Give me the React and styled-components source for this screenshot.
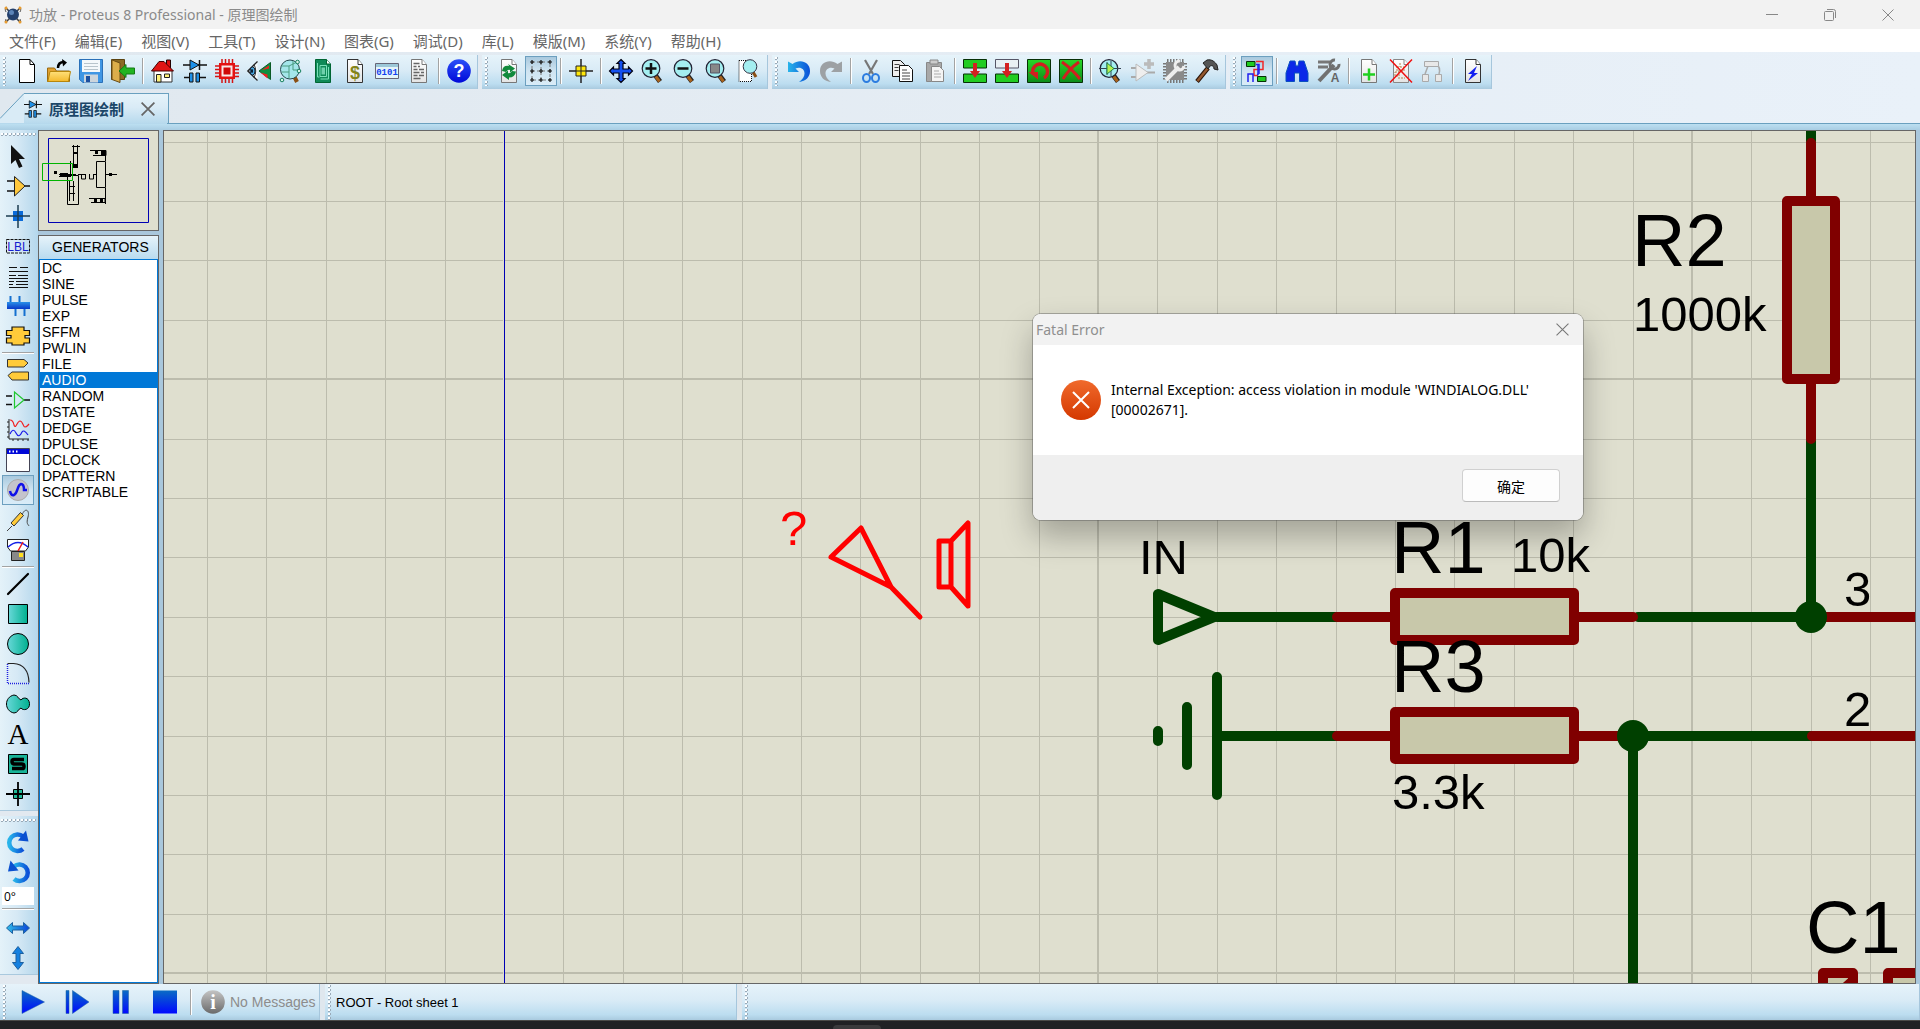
import React from "react";
import styled, { createGlobalStyle, css } from "styled-components";

const GlobalStyle = createGlobalStyle`
  * {
    box-sizing: border-box;
  }
  body {
    margin: 0;
    overflow: hidden;
    font-family: "Noto Sans", "Noto Sans CJK SC", sans-serif;
    font-size: 15px;
    color: #000;
  }
  button {
    padding: 0;
    border: none;
    background: none;
    font: inherit;
    color: inherit;
  }
  ul {
    margin: 0;
    padding: 0;
    list-style: none;
  }
  svg {
    display: block;
    flex: none;
  }
`;

/* ---------- window ---------- */
const Window = styled.div`
  display: flex;
  flex-direction: column;
  height: 100vh;
  background: #e4ebf2;
`;

const TitleBar = styled.header`
  display: flex;
  align-items: center;
  height: 29px;
  padding: 0 3px;
  background: #f2f2f2;
  color: #8a8a8a;
`;

const WindowTitle = styled.h1`
  flex: 1;
  margin: 0 0 0 6px;
  font-size: 14px;
  font-weight: 400;
  line-height: 20px;
`;

const CaptionButton = styled.button`
  display: flex;
  align-items: center;
  justify-content: center;
  width: 58px;
  height: 28px;
`;

const MenuBar = styled.nav`
  display: flex;
  gap: 19px;
  height: 23px;
  padding-left: 9px;
  background: #fff;
  color: #666;
  line-height: 24px;
`;

/* ---------- toolbars ---------- */
const ToolRow = styled.div`
  display: flex;
  gap: 4px;
  padding-top: 3px;
  background: linear-gradient(90deg, #e0e8ef, #e9f1f9);
`;

const blueDown = css`
  background: linear-gradient(#e6f3fa, #d9ebf6 45%, #bcddf0 85%, #a9cadf);
`;

const ToolGroup = styled.div`
  display: flex;
  height: 34px;
  padding: 1px 2px 3px 0;
  border-right: 1px solid #a6c6dc;
  ${blueDown}
`;

const Grip = styled.span`
  width: 11px;
  flex: none;
  background: radial-gradient(circle at 1px 1px, #fff 1px, #9aaab8 1px, #9aaab8 2px, transparent 2px) 3px 1px / 3px 4px repeat-y;
`;

const ToolButton = styled.button`
  display: flex;
  align-items: center;
  justify-content: center;
  width: 32px;
  height: 30px;
  flex: none;
  ${(props) =>
    props.$active &&
    css`
      border: 1px solid #6c9fbf;
      background: linear-gradient(#a9c9de, #cfe4f1 50%, #d9ecf8);
    `}
`;

const Divider = styled.span`
  width: 2px;
  height: 26px;
  margin: 2px 3px;
  flex: none;
  background: linear-gradient(90deg, #a3a3a3 50%, #fff 50%);
`;

/* ---------- document tab ---------- */
const TabRow = styled.div`
  display: flex;
  height: 41px;
  padding-top: 4px;
  background: linear-gradient(90deg, #e0e8ef, #e9f1f9);
`;

const Tab = styled.div`
  display: flex;
  align-items: center;
  width: 145px;
  height: 31px;
  border-top: 1px solid #6aa0bf;
  border-right: 1px solid #6aa0bf;
  background: linear-gradient(#e6f3fa, #d9ebf6 45%, #b6d9ed);
`;

const TabName = styled.span`
  flex: 1;
  margin-left: 7px;
  color: #1b4668;
  font-weight: 700;
  line-height: 22px;
`;

const TabClose = styled.button`
  width: 40px;
  height: 28px;
  display: flex;
  align-items: center;
  justify-content: center;
`;

const TabBand = styled.div`
  height: 7px;
  margin-top: -7px;
  border-top: 1px solid #6aa0bf;
  background: linear-gradient(#bcdff1, #a9cde3);
  /* the tab opens into the band */
  border-image: linear-gradient(90deg, #b6d9ed 168px, #6aa0bf 168px) 1;
`;

/* ---------- work area ---------- */
const WorkArea = styled.div`
  display: flex;
  flex: 1;
  min-height: 0;
  padding-right: 4px;
  background: #a9c7dc;
`;

const SideBar = styled.div`
  display: flex;
  flex-direction: column;
  gap: 5px;
  width: 38px;
  flex: none;
  background: #e2e9f0;
`;

const SideGroup = styled.div`
  display: flex;
  flex-direction: column;
  align-items: center;
  padding: 0 2px 1px 0;
  border-bottom: 1px solid #a9c9de;
  background: linear-gradient(90deg, #e4f2f9, #d6e9f5 45%, #b4d7ec);
`;

const SideGrip = styled.span`
  align-self: stretch;
  height: 11px;
  background: radial-gradient(circle at 1px 1px, #fff 1px, #9aaab8 1px, #9aaab8 2px, transparent 2px) 1px 3px / 4px 3px repeat-x;
`;

const SideDivider = styled.span`
  width: 32px;
  height: 2px;
  margin: ${(props) => props.$space}px 0;
  background: linear-gradient(#a3a3a3 50%, #fff 50%);
`;

const AngleInput = styled.input`
  width: 32px;
  height: 18px;
  padding: 0 2px;
  border: none;
  background: #fff;
  font-family: "Open Sans", sans-serif;
  font-size: 12px;
`;

const Panel = styled.aside`
  display: flex;
  flex-direction: column;
  gap: 4px;
  width: 121px;
  margin-right: 4px;
  flex: none;
`;

const Overview = styled.div`
  height: 101px;
  border: 1px solid #666;
  background: #dfdfcf;
`;

const Picker = styled.div`
  display: flex;
  flex-direction: column;
  flex: 1;
  border: 1px solid #666;
`;

const PickerTitle = styled.h2`
  height: 23px;
  margin: 0;
  padding-left: 13px;
  background: linear-gradient(#e6f3fa, #b9dbef);
  font: 400 14px/23px "Liberation Sans", Arial, sans-serif;
`;

const PickerList = styled.ul`
  flex: 1;
  border: 1px solid #0078d7;
  background: #fff;
  font: 14px/16px "Liberation Sans", Arial, sans-serif;
`;

const PickerItem = styled.li`
  height: 16px;
  padding-left: 2px;
  ${(props) =>
    props.$selected &&
    css`
      background: #0078d7;
      color: #fff;
    `}
`;

const Sheet = styled.main`
  position: relative;
  flex: 1;
  min-width: 0;
  border: 1px solid #666;
  background: #dfdfcf;
`;

const SheetDrawing = styled.svg`
  width: 100%;
  height: 100%;
  overflow: hidden;
  font-family: "Liberation Sans", Arial, sans-serif;
`;

/* ---------- error dialog ---------- */
const Dialog = styled.section`
  position: absolute;
  top: 183px;
  left: 869px;
  width: 550px;
  border-radius: 8px;
  background: #fff;
  box-shadow: 0 0 0 1px rgba(90, 90, 90, 0.45), 0 16px 32px rgba(0, 0, 0, 0.28);
  overflow: hidden;
`;

const DialogTitle = styled.div`
  display: flex;
  align-items: center;
  justify-content: space-between;
  height: 31px;
  padding-left: 3px;
  background: #f2f2f2;
  color: #8f8f8f;
  font-size: 14px;
`;

const DialogClose = styled.button`
  display: flex;
  align-items: center;
  justify-content: center;
  width: 42px;
  height: 31px;
`;

const DialogBody = styled.div`
  display: flex;
  align-items: center;
  gap: 10px;
  height: 110px;
  padding: 0 28px;
`;

const DialogText = styled.p`
  margin: 0;
  font-size: 14px;
  line-height: 20px;
`;

const DialogFooter = styled.div`
  display: flex;
  justify-content: flex-end;
  align-items: center;
  height: 65px;
  padding: 0 23px 4px;
  background: #efefef;
`;

const OkButton = styled.button`
  width: 98px;
  height: 33px;
  border: 1px solid #d0d0d0;
  border-bottom-color: #bbb;
  border-radius: 4px;
  background: #fdfdfd;
  font-size: 14px;
`;

/* ---------- bottom ---------- */
const StatusBar = styled.footer`
  display: flex;
  gap: 5px;
  height: 36px;
  background: #dfe7ee;
`;

const StatusGroup = styled.div`
  display: flex;
  align-items: center;
  width: ${(props) => (props.$width ? `${props.$width}px` : "auto")};
  flex: ${(props) => (props.$width ? "none" : 1)};
  border-right: 1px solid #a6c6dc;
  font-family: "Liberation Sans", Arial, sans-serif;
  font-size: 13px;
  ${blueDown}

  ${Grip} {
    align-self: stretch;
  }
`;

const PlayButton = styled.button`
  display: flex;
  align-items: center;
  justify-content: center;
  width: 44px;
  height: 30px;
`;

const Messages = styled.div`
  display: flex;
  align-items: center;
  gap: 5px;
  margin-left: 6px;
  color: #8c8c8c;
  font-size: 14px;
`;

const Taskbar = styled.div`
  display: flex;
  align-items: flex-end;
  height: 9px;
  padding-left: 833px;
  border-top: 1px solid #4a4a48;
  background: #202124;
`;

const TaskItem = styled.span`
  width: 48px;
  height: 4px;
  border-radius: 4px 4px 0 0;
  background: #3a3a3c;
`;

/* ---------- icons ---------- */
const IconSvg = styled.svg`
  overflow: visible;
`;

const Page = ({ stroke = "#333", children }) => (
  <>
    <path d="M4.500 .5h10.500l4.500 5v18h-15z" fill="url(#paper)" stroke={stroke} />
    <path d="M15 .5v5h4.500" fill="#fff" stroke={stroke} />
    {children}
  </>
);

const Lens = ({ children }) => (
  <>
    <path d="M14.500 16.500l4.500 6" stroke="#222" strokeWidth="5" />
    <path d="M14.500 17l4 5.500" stroke="#a8621c" strokeWidth="3" />
    <circle cx="10" cy="9.500" r="8.800" fill="#a4eef0" stroke="#223" strokeWidth="1.200" />
    {children}
  </>
);

const Diode = () => (
  <>
    <path d="M0 6h24M1 18.500h8M15 18.500h8" stroke="#111" strokeWidth="1.500" />
    <path d="M7 1v10l9-5z" fill="#1e90e8" stroke="#111" />
    <path d="M16.500 1v10" stroke="#111" strokeWidth="1.500" />
    <path d="M6.500 14h3.500v9h-3.500zM13 14h3.500v9H13z" fill="#1e90e8" stroke="#111" />
  </>
);

const icons = {
  new: <><path d="M4.500 .5h10.500l4.500 5v18h-15z" fill="#fff" stroke="#000" /><path d="M15 .5v5h4.500" fill="none" stroke="#000" /></>,
  open: (
    <>
      <path d="M.5 22.500V9h7l2 3h13v10.500z" fill="#e0a030" stroke="#9a6a10" />
      <path d="M3 12.500h20.500l-2 10H.8z" fill="url(#gold)" stroke="#b8860b" />
      <path d="M11 9c0-4 2-6 6-6" fill="none" stroke="#000" strokeWidth="2.500" />
      <path d="M15 0l5 3.500-4 4z" fill="#000" />
    </>
  ),
  save: (
    <>
      <path d="M.5 .5h23v23H4l-3.500-3z" fill="#3f96e4" stroke="#2a70b8" />
      <path d="M3 1h18v12H3z" fill="#f4f8fb" />
      <path d="M5 4.500h14M5 7.500h14M5 10.500h14" stroke="#b8c4cc" />
      <path d="M5 15.500h14v8H5z" fill="#ccd5dc" />
      <path d="M7 17h4v6H7z" fill="#1c50a0" />
    </>
  ),
  exit: (
    <>
      <path d="M.5 .5h13v20h-13z" fill="#8a6a24" stroke="#5a4210" />
      <path d="M1 1l8 3v19.500l-8-3z" fill="#dcae4a" stroke="#6a4c14" />
      <path d="M8 12l7-6.500v3.500h8.500v6H15v3.500z" fill="#22b422" stroke="#157a15" />
    </>
  ),
  home: (
    <>
      <path d="M15.500 1h4v8h-4z" fill="#e01010" stroke="#200" />
      <path d="M3 11h18v12H3z" fill="#fff" stroke="#333" />
      <path d="M.5 12L8 2.500h5L22.500 12z" fill="#e01414" stroke="#400" />
      <path d="M5.500 15.500h4.500v7.500H5.500z" fill="#fff27a" stroke="#222" />
      <path d="M13.500 15h5v3.500h-5z" fill="#fff27a" stroke="#222" />
    </>
  ),
  diode: <Diode />,
  chip: (
    <>
      <path d="M7 0v24M10.500 0v24M14 0v24M17.500 0v24M0 7h24M0 10.500h24M0 14h24M0 17.500h24" stroke="#d41414" strokeWidth="1.500" />
      <path d="M4 4h16v16H4z" fill="#e41212" />
      <path d="M6.500 6.500h11v11h-11z" fill="#f8e8e8" />
      <path d="M8.500 8.500h7v7h-7z" fill="#d00808" />
    </>
  ),
  eye: (
    <>
      <path d="M23.500 3.500v17L12 12z" fill="#109040" stroke="#0a5a24" />
      <path d="M15 11l7-4.500v3zM13.500 13.500l7 2v4z" fill="#f02020" />
      <path d="M10.500 2.500L.8 12l9.700 9.500" fill="#f4fafc" stroke="#222" strokeWidth="1.300" />
      <path d="M7 5.500q3.500 6.500 0 13" fill="none" stroke="#333" />
      <ellipse cx="5.500" cy="12" rx="2.500" ry="4" fill="#4aa8e0" stroke="#123" />
      <ellipse cx="5" cy="12" rx="1" ry="2" fill="#012" />
    </>
  ),
  zoomPart: (
    <>
      <path d="M15 17l3 6" stroke="#8a4f14" strokeWidth="4" />
      <circle cx="11" cy="10.500" r="9.500" fill="#a4e6ea" stroke="#26484c" />
      <path d="M3 7h7v12M10 7l8-4M3 13h7M14 2v9h6" fill="none" stroke="#4a9c80" />
      <g fill="#d8f4e8" stroke="#168060"><circle cx="18.500" cy="3" r="1.800" /><circle cx="3" cy="21" r="1.800" /><circle cx="20" cy="12" r="1.800" /></g>
    </>
  ),
  board: (
    <>
      <path d="M4.500 .5h11l4 4.500v18.500h-15z" fill="#0f8a58" stroke="#063" />
      <path d="M15.500 .5V5h4" fill="#fff" stroke="#063" />
      <path d="M9 6.500h6.500v11H9zM6.500 4v14h2M17.500 8v12h-8" fill="none" stroke="#7ae0b8" />
      <path d="M10.500 8.500h3.500v7h-3.500z" fill="#6fd0ac" />
    </>
  ),
  dollar: <Page><text x="12" y="20" textAnchor="middle" fontSize="18" fontWeight="700" fontFamily="Liberation Sans" fill="#84841a">$</text></Page>,
  binary: (
    <>
      <path d="M.5 4.500h23v15H.5z" fill="#e4f4fa" stroke="#667" />
      <path d="M1 5h22v3H1z" fill="#9cc8d8" />
      <text x="12" y="16" textAnchor="middle" fontSize="9" fontWeight="700" fontFamily="Liberation Mono" fill="#1040f0">0101</text>
    </>
  ),
  report: <Page stroke="#777"><path d="M6.500 4.500h6M6.500 7.500h3M11 7.500h2M6.500 10.500h4M12 10.500h5M6.500 13.500h6M14 13.500h3M6.500 16.500h4M12 16.500h5M6.500 19.500h7" stroke="#666" strokeWidth="1.500" /></Page>,
  help: (
    <>
      <circle cx="12" cy="12" r="11.800" fill="url(#helpBlue)" />
      <text x="12" y="18" textAnchor="middle" fontSize="18" fontWeight="700" fontFamily="Liberation Sans" fill="#fff">?</text>
    </>
  ),
  refresh: (
    <Page stroke="#777">
      <path d="M5 12q1-6 7-5l-1-2 7 4.500-5 4v-2.500q-2-1-4 2z" fill="#128a3c" />
      <path d="M19 12.500q-1 6-7 6v2.500l-7-5 6-4.500v2.500q2 1 4-2z" fill="#128a3c" />
    </Page>
  ),
  grid: (
    <>
      <path d="M3 3h18v18H3zM12 3v18M3 12h18" fill="none" stroke="#777" strokeDasharray="3 2" />
      {[3, 12, 21].map((y) => (
        <path key={y} d={`M1 ${y}h4M3 ${y - 2}v4M10 ${y}h4M12 ${y - 2}v4M19 ${y}h4M21 ${y - 2}v4`} stroke="#111" strokeWidth="1.200" />
      ))}
    </>
  ),
  origin: <><path d="M0 12h24M12 0v24" stroke="#222" strokeWidth="1.500" /><path d="M7 7h10v10H7z" fill="#ffe80a" stroke="#222" /><path d="M12 7v10M7 12h10" stroke="#222" /></>,
  pan: <path d="M12 .5l4 4h-2v5.500h5.500V8l4 4-4 4v-2H14v5.500h2l-4 4-4-4h2V14H4.500v2l-4-4 4-4v2H10V4.500H8z" fill="#1450f0" stroke="#001" strokeWidth="1.200" />,
  zoomIn: <Lens><path d="M4.500 9.500h11M10 4v11" stroke="#111" strokeWidth="2.500" /></Lens>,
  zoomOut: <Lens><path d="M4.500 9.500h11" stroke="#111" strokeWidth="2.500" /></Lens>,
  zoomAll: <Lens><path d="M5.500 5h9v9h-9z" fill="#888" stroke="#556" /></Lens>,
  zoomArea: (
    <>
      <path d="M2 1.500h12.500v21H2z" fill="#fff" stroke="#111" strokeDasharray="1 1" />
      <path d="M16 13l3 5" stroke="#8a4f14" strokeWidth="3" />
      <circle cx="13" cy="7.500" r="6.800" fill="#a4eef0" stroke="#334" />
    </>
  ),
  undo: <path d="M1 2.500V13h11l-3.500-3.500c5-2 9 .5 9 5 0 3-2 6-5.500 8.500 7-1 11-5 11-11C23 3 13-.5 5.500 5z" fill="url(#undoBlue)" />,
  redo: <path d="M23 2.500V13H12l3.500-3.500c-5-2-9 .5-9 5 0 3 2 6 5.500 8.500-7-1-11-5-11-11C1 3 11-.5 18.500 5z" fill="#9da1a4" />,
  cut: (
    <>
      <path d="M6 1l8 14M18 1l-8 14" stroke="#777" strokeWidth="2.200" />
      <ellipse cx="7.500" cy="19" rx="3.500" ry="4" fill="none" stroke="#2c7ce0" strokeWidth="2" />
      <ellipse cx="16.500" cy="19" rx="3.500" ry="4" fill="none" stroke="#2c7ce0" strokeWidth="2" />
    </>
  ),
  copy: (
    <>
      <path d="M1.500 1.500h8l4 4v12h-12z" fill="#eee" stroke="#111" />
      <path d="M3.500 5.500h5M3.500 8.500h4M3.500 11.500h4" stroke="#444" />
      <path d="M8.500 6.500h9l4 4v12h-13z" fill="#fff" stroke="#111" />
      <path d="M11 11h5M11 14h8M11 17h8M11 20h8" stroke="#444" />
    </>
  ),
  paste: (
    <>
      <path d="M3.500 3.500h15v19h-15z" fill="#a8a8a8" stroke="#888" />
      <path d="M7 1h8v4H7z" fill="#ccc" stroke="#888" />
      <path d="M8.500 7.500h8l4 4v11h-12z" fill="#f4f4f4" stroke="#888" />
      <path d="M11 12h5M11 15h7M11 18h7" stroke="#aaa" />
    </>
  ),
  blockCopy: <><path d="M.5 .5h23v8.500H.5zM.5 15h23v8.500H.5z" fill="#22cc22" stroke="#063006" /><path d="M12 4v10" stroke="#d42020" strokeWidth="4" /><path d="M7 12h10l-5 7z" fill="#d42020" /></>,
  blockMove: <><path d="M.5 .5h23v8.500H.5z" fill="#e8f0f4" stroke="#556" /><path d="M.5 15h23v8.500H.5z" fill="#22cc22" stroke="#063006" /><path d="M12 4v10" stroke="#d42020" strokeWidth="4" /><path d="M7 12h10l-5 7z" fill="#d42020" /></>,
  blockRotate: <><path d="M.5 .5h23v23H.5z" fill="url(#leaf)" stroke="#063006" /><path d="M6 15a7.500 7.500 0 1 1 11 4" fill="none" stroke="#d02020" strokeWidth="3.500" /><path d="M1.500 13h9.500v7.500z" fill="#d02020" /></>,
  blockDelete: <><path d="M.5 .5h23v23H.5z" fill="url(#leaf)" stroke="#063006" /><path d="M3 3q10 7 18 17M20 3Q10 10 4 20" fill="none" stroke="#d02020" strokeWidth="3" /></>,
  pick: <Lens><path d="M0 9.500h22M8 3v13M12 2v15" stroke="#345" /><path d="M8 4v11l7-5.500z" fill="#b4f050" stroke="#284" /></Lens>,
  make: (
    <>
      <path d="M0 9h5M0 18h5M15 13.500h9" stroke="#aaa" strokeWidth="2" />
      <path d="M5 5v17l12-8.500z" fill="#eee" stroke="#bbb" />
      <path d="M18 0v10M13 5h10" stroke="#bbb" strokeWidth="3.500" />
    </>
  ),
  packaging: (
    <>
      <path d="M3 3h18v18H3z" fill="#8a8a8a" />
      <path d="M4 1.500h17M4 22.500h17M1.500 4v17M22.500 4v17" stroke="#777" strokeWidth="3" strokeDasharray="1.500 1.500" />
      <path d="M3 21L16 8" stroke="#eee" strokeWidth="4" />
      <path d="M21 7a4.500 4.500 0 1 1-4-5" fill="none" stroke="#eee" strokeWidth="3" />
    </>
  ),
  hammer: (
    <>
      <path d="M2 22.500L13 9" stroke="#2a1408" strokeWidth="4.500" />
      <path d="M2.500 22L13 9" stroke="#94582e" strokeWidth="2.500" />
      <path d="M8 4l4-3c5-1 8 2 10 5l1 5-4-1c0-3-2-4-4-3l-2 3z" fill="#555" stroke="#222" />
    </>
  ),
  autoroute: (
    <>
      <path d="M11 2.500h7v8h-9v6h4" fill="none" stroke="#f02828" strokeWidth="1.500" />
      <path d="M8 5v0M13 5v10.500h-1M3 23v-8h5v8" fill="none" stroke="#2020f0" strokeWidth="1.500" />
      <path d="M11 5.500h3v9.500" fill="none" stroke="#2020f0" strokeWidth="1.500" />
      <path d="M1.500 2.500h8.500v5H1.500zM12.500 17.500h8.500v5h-8.500z" fill="#20cc20" stroke="#063006" />
    </>
  ),
  find: (
    <path d="M5 2h5l1 5h2l1-5h5l4 12v8.500h-8.500V14h-5v8.500H1V14z" fill="#0a28e8" stroke="#0a50c0" />
  ),
  property: (
    <>
      <path d="M1 3h12M1 8h10" stroke="#777" strokeWidth="3" />
      <path d="M2 22L17 6" stroke="#707070" strokeWidth="4" />
      <path d="M22 5a4.500 4.500 0 1 1-4-4" fill="none" stroke="#707070" strokeWidth="3" />
      <text x="18" y="23" textAnchor="middle" fontSize="12" fontWeight="700" fontFamily="Liberation Sans" fill="#666">A</text>
    </>
  ),
  addSheet: <Page stroke="#777"><path d="M6 15.500h12M12 9.500v12" stroke="#20d020" strokeWidth="2.500" /></Page>,
  delSheet: <Page stroke="#888"><path d="M11 4v4M8 8h7v4H8zM9 19h7M6 13h4v4H6z" fill="none" stroke="#b08850" strokeDasharray="2 1" /><path d="M1 .5l22 23M23 .5l-22 23" stroke="#f01010" strokeWidth="1.500" /></Page>,
  tree: (
    <>
      <path d="M7 7L4 15M15 5q5 3 3 10" fill="none" stroke="#aaa" strokeWidth="1.500" />
      <path d="M3.500 2.500h14v5h-14zM1.500 15.500h6v7h-6zM14.500 15.500h6v7h-6z" fill="#e8e8e8" stroke="#aaa" />
    </>
  ),
  erc: <Page><path d="M16 7L7 15h4l-4 7 10-8h-4z" fill="#1420f0" /></Page>,

  // side tool modes
  select: <path d="M5 1v19l4.500-4 3.500 8 3.500-1.500L13 15h6z" fill="#111" />,
  component: <><path d="M1 7h8M1 17h8M18 12h6" stroke="#111" strokeWidth="1.500" /><path d="M8.500 2.500v19.500L19 12z" fill="#ffc83c" stroke="#222" /></>,
  junction: <><path d="M7 7h10v10H7z" fill="#0a6ad8" /><path d="M0 12h24M12 1v23" stroke="#1c3c50" strokeWidth="1.500" /></>,
  label: (
    <>
      <path d="M.5 5.500h23v13.500H.5z" fill="none" stroke="#111" strokeDasharray="3 1" />
      <text x="12" y="16.500" textAnchor="middle" fontSize="12" fontFamily="Liberation Sans" fill="#1420d0">LBL</text>
    </>
  ),
  script: <path d="M3 3.500h8M14 3.500h8M3 7.500h19M3 11.500h7M12 11.500h10M3 14.500h19M3 17.500h5M10 17.500h12M3 20.500h4M10 20.500h12M3 23.500h19" stroke="#111" />,
  bus: <><path d="M4.500 2v8M13.500 2v8M9.500 14v8M18.500 14v8" stroke="#1470d0" strokeWidth="2" /><path d="M1 8h23v7H1z" fill="url(#busBlue)" /></>,
  subcircuit: <path d="M6 3h12v3.500h5.500v5H19v2.500h4.500v5H18V21H6v-2H.5v-5H5v-2.500H.5v-5H6z" fill="#ffcb3a" stroke="#111" strokeWidth="1.200" />,
  terminal: <path d="M1.500 1.500H18l4 3.500-4 4H1.500zM22.500 14H6l-4 3.500 4 4.500h16.500z" fill="#ffcb3a" stroke="#333" />,
  pin: <><path d="M0 8h6M0 16.500h6M18 12h6" stroke="#111" strokeWidth="1.500" /><path d="M8.500 4v16L18 12z" fill="none" stroke="#20c830" strokeWidth="1.200" /></>,
  graph: (
    <>
      <path d="M3 1v20h20M1 4h2M1 9h2M1 14h2M1 19h2M7 21v2M12 21v2M17 21v2M22 21v2" fill="none" stroke="#222" />
      <path d="M4 2q3 0 4 5c2 5 3-4 6-4s3 6 5 6 2-1 4-3" fill="none" stroke="#f02020" strokeWidth="1.200" />
      <path d="M4 16q3-7 6-1t6-1q2-3 6 3" fill="none" stroke="#1818e8" strokeWidth="1.200" />
    </>
  ),
  popup: <><path d="M.5 .5h23v23H.5z" fill="#fff" stroke="#445" /><path d="M1 1h22v5H1z" fill="#0008d8" /><path d="M3 3.500h1.500M6.500 3.500H8M10 3.500h1.500" stroke="#fff" strokeWidth="2" /></>,
  generator: <><circle cx="12" cy="12" r="10.500" fill="#c4c4cc" stroke="#aaa" /><path d="M4 13q1 5 4 4c4-2 3-10 7-11 3 0 3 3 3 6h3" fill="none" stroke="#1010e8" strokeWidth="2.500" /></>,
  probe: <><path d="M1 23l5-5M16 7c3-8 8-5 6 2s0 7 1 9" fill="none" stroke="#444" /><path d="M5 15L14.500 4.500l3 3L8 18z" fill="#ffcb3a" stroke="#333" /></>,
  meter: (
    <>
      <path d="M1.500 1.500h21V9l-3 4H4.500l-3-4z" fill="#fff" stroke="#222" />
      <path d="M2 9q10-9 20 0" fill="none" stroke="#1420e8" strokeWidth="1.500" />
      <path d="M12 13l5-9" stroke="#f01818" strokeWidth="1.500" />
      <path d="M5.500 13.500h13v9h-13z" fill="#888" stroke="#222" /><path d="M13 15h4v4h-4z" fill="#ffe020" />
    </>
  ),
  line: <path d="M2 22L22 2" stroke="#000" strokeWidth="2.200" strokeLinecap="round" />,
  box: <path d="M2.500 2.500h19v19h-19z" fill="url(#teal)" stroke="#000" />,
  circle: <circle cx="12" cy="12" r="10.500" fill="url(#teal)" stroke="#000" />,
  arc: <><path d="M1.500 2v19.500h22" fill="none" stroke="#2020e0" strokeDasharray="1 1" strokeWidth="1.500" /><path d="M1.500 1.500h6q15 1 15.500 19" fill="none" stroke="#222" strokeWidth="1.200" /></>,
  path: <path d="M8 3c4 0 4 4 7 5 2-3 8-3 8.500 3.500S17 19 15 16c-3 1-3 5-7 5C-2 19-2 5 8 3z" fill="url(#teal)" stroke="#000" />,
  text: <text x="12" y="22" textAnchor="middle" fontSize="29" fontFamily="Liberation Serif" fill="#000">A</text>,
  symbol: <><path d="M2.500 2.500h19v19h-19z" fill="#18b498" stroke="#000" /><path d="M18 7.500H8q-2 0-2 2t2 2.500h8q2 0 2 2.500t-2 2H6" fill="none" stroke="#000" strokeWidth="3.500" /></>,
  marker: <><path d="M7.500 7.500h9v9h-9z" fill="#20b898" stroke="#000" /><path d="M0 12h24M12 0v24" stroke="#000" strokeWidth="1.800" /></>,
  cw: (
    <>
      <path d="M17 6.500a8.300 8.300 0 1 0 0 12.500" fill="none" stroke="url(#undoBlue)" strokeWidth="4.500" />
      <path d="M20 .5l2.500 11-10.500-1z" fill="#0a50d0" />
    </>
  ),
  ccw: (
    <>
      <path d="M8 6.500a8.300 8.300 0 1 1 0 12.500" fill="none" stroke="url(#undoBlue)" strokeWidth="4.500" />
      <path d="M4.500 .5L2 11.500l10.500-1z" fill="#0a50d0" />
    </>
  ),
  flipH: <path d="M.5 12l6-5.500V10h11V6.500l6 5.500-6 5.500V14h-11v3.500z" fill="url(#flip)" stroke="#1c60a0" />,
  flipV: <path d="M12 .5l5.500 7H14v9h3.500l-5.500 7-5.500-7H10v-9H6.500z" fill="#1480e0" stroke="#1c60a0" />,

  // simulation control
  play: <path d="M1 .5v23L23.500 12z" fill="url(#playBlue)" stroke="#1c60a0" strokeWidth=".5" />,
  step: <path d="M1 .5h3v23H1zM7.500 .5v23L24 12z" fill="url(#playBlue)" stroke="#1c60a0" strokeWidth=".5" />,
  pause: <path d="M4 .5h6v23H4zM13.500 .5h6v23h-6z" fill="url(#playBlue)" stroke="#1c60a0" strokeWidth=".5" />,
  stop: <path d="M0 .5h24v23H0z" fill="url(#playBlue)" />,
  info: (
    <>
      <circle cx="12" cy="12" r="11.800" fill="url(#infoGray)" />
      <text x="12" y="19" textAnchor="middle" fontSize="20" fontWeight="700" fontFamily="Liberation Serif" fill="#fff">i</text>
    </>
  ),
};

const Icon = ({ name, size = 24 }) => (
  <IconSvg width={size} height={size} viewBox="0 0 24 24" fill="none" aria-hidden="true">
    {icons[name]}
  </IconSvg>
);

const CrossIcon = ({ size, color, width = 1 }) => (
  <svg width={size} height={size} viewBox="0 0 12 12" aria-hidden="true">
    <path d="M.5 .5l11 11M11.500 .5l-11 11" stroke={color} strokeWidth={width} />
  </svg>
);

const Gradient = ({ id, from, to, down }) => (
  <linearGradient id={id} x1="0" y1="0" x2={down ? 0 : 1} y2={down ? 1 : 0}>
    <stop offset="0" stopColor={from} />
    <stop offset="1" stopColor={to} />
  </linearGradient>
);

const DefsSvg = styled.svg`
  position: absolute;
`;

const GradientDefs = () => (
  <DefsSvg width="0" height="0" aria-hidden="true">
    <defs>
      <Gradient id="paper" from="#fff" to="#e4e4e4" down />
      <Gradient id="gold" from="#ffe07a" to="#f4b92c" down />
      <Gradient id="helpBlue" from="#2a50f8" to="#0008d8" down />
      <Gradient id="undoBlue" from="#28b4ea" to="#0a50d8" />
      <Gradient id="leaf" from="#28d828" to="#0c8c18" down />
      <Gradient id="busBlue" from="#2a90e8" to="#0838c8" down />
      <Gradient id="teal" from="#68d8d8" to="#00b090" />
      <Gradient id="flip" from="#30bce8" to="#0a44d8" />
      <Gradient id="playBlue" from="#0a6cc4" to="#0008ff" down />
      <Gradient id="infoGray" from="#c4c4c4" to="#6a6a6a" down />
      <Gradient id="errorRed" from="#f06a2c" to="#d43800" down />
    </defs>
  </DefsSvg>
);

/* ---------- data ---------- */
const menus = ["文件(F)", "编辑(E)", "视图(V)", "工具(T)", "设计(N)", "图表(G)", "调试(D)", "库(L)", "模版(M)", "系统(Y)", "帮助(H)"];

// "|" is a divider
const toolGroups = [
  ["new", "open", "save", "exit", "|", "home", "diode", "chip", "eye", "zoomPart", "board", "dollar", "binary", "report", "|", "help"],
  ["refresh", "grid", "|", "origin", "|", "pan", "zoomIn", "zoomOut", "zoomAll", "zoomArea"],
  ["undo", "redo", "|", "cut", "copy", "paste", "|", "blockCopy", "blockMove", "blockRotate", "blockDelete", "|", "pick", "make", "packaging", "hammer"],
  ["autoroute", "|", "find", "property", "|", "addSheet", "delSheet", "tree", "|", "erc"],
];

const modes = [
  "select", "component", "junction", "label", "script", "bus", "subcircuit", "|",
  "terminal", "pin", "graph", "popup", "generator", "probe", "meter", "|",
  "line", "box", "circle", "arc", "path", "text", "symbol", "marker",
];

const activeTools = ["grid", "autoroute", "generator"];

const generators = [
  "DC", "SINE", "PULSE", "EXP", "SFFM", "PWLIN", "FILE", "AUDIO", "RANDOM",
  "DSTATE", "DEDGE", "DPULSE", "DCLOCK", "DPATTERN", "SCRIPTABLE",
];

/* ---------- drawings ---------- */
const AppLogo = () => (
  <svg width="20" height="20" viewBox="0 0 20 20" aria-hidden="true">
    <path d="M3 3l14 14M17 3L3 17" stroke="#444" strokeWidth="1.500" />
    <path d="M4 2q-3 1-1 5M16 2q3 1 1 5M4 18q-3-1-1-4M16 18q3-1 1-4" fill="none" stroke="#555" />
    <circle cx="10" cy="9.500" r="6" fill="#24406c" />
    <circle cx="8.500" cy="7.500" r="2.500" fill="#5c84b8" />
    <g fill="#e89c30"><circle cx="3" cy="3" r="1.500" /><circle cx="17" cy="3" r="1.500" /><circle cx="3" cy="17" r="1.500" /><circle cx="17" cy="17" r="1.500" /></g>
  </svg>
);

const OverviewMap = () => (
  <svg width="119" height="99" viewBox="0 0 119 99" fill="none" aria-hidden="true">
    <path d="M9.500 7.500h100v84h-100z" stroke="#0000b4" />
    <g stroke="#000">
      <path d="M34.500 14v18M38.500 14v18M33 15.500h8M34 21.500h5M34.500 22.500h4v11h-4z" />
      <path d="M28.500 44.500h11v29h-11zM30.500 50v20M34.500 50v20M30 55.500h6M30 62.500h6" />
      <path d="M31.500 30v14M20 43.500h17M20 45.500h12M39 43.500h8M42.500 43v5h4v-5M50.500 43v5h4v-5M54 43.500h4" />
      <path d="M57.500 30.500h9v26h-9zM51 19.500h16v5H54M50 67.500h16v4H52M66.500 19v11M66.500 57v16M66 43.500h12" />
    </g>
    <path d="M15 40h3v3h-3zM34 33h5v4h-5zM56 20h3v3h-3zM62 20h5v4h-5zM55 68h3v3h-3zM61 68h3v3h-3zM70 42h3v3h-3zM21 42h8v4h-8z" fill="#000" />
    <path d="M3.500 32.500h30v17h-30z" stroke="#00b400" />
  </svg>
);

// every tenth grid line is a heavy one
const columns = Array.from({ length: 30 }, (_, i) => ({ at: Math.round(43 + 59.4 * i), major: i % 10 === 5 }));
const rows = Array.from({ length: 15 }, (_, i) => ({ at: Math.floor(11 + 59.4 * i), major: i % 10 === 4 }));

const Schematic = () => (
  <SheetDrawing role="img" aria-label="Schematic" fill="none">
    <g shapeRendering="crispEdges" fill="#bcbcad">
      {columns.map(({ at, major }) => (
        <rect key={at} x={major ? at - 1 : at} y="0" width={major ? 2 : 1} height="100%" />
      ))}
      {rows.map(({ at, major }) => (
        <rect key={at} x="0" y={major ? at - 1 : at} width="100%" height={major ? 2 : 1} />
      ))}
      <rect x="339" y="0" width="2" height="100%" fill="#dfdfcf" />
      <rect x="340" y="0" width="1" height="100%" fill="#0000b4" />
    </g>

    {/* wires */}
    <g stroke="#004000" strokeWidth="10" strokeLinecap="round">
      <path d="M1647 0v10M1647 310v176M1053 486h120M1474 486h173M1053 605h120M1469 605h178M1469 605v260" />
      <path d="M994 463v46l56-23z" strokeLinejoin="round" />
      <path d="M1053 546v118M1023 576v58M994 600v10" />
    </g>
    {/* pins and bodies */}
    <g stroke="#800000" strokeWidth="10" strokeLinecap="round" strokeLinejoin="round">
      <path d="M1647 12v58M1647 248v60M1173 486h58M1410 486h59M1647 486h120M1173 605h58M1410 605h59M1648 605h120" />
      <path d="M1623 70h48v178h-48zM1231 462h179v47h-179zM1231 581h179v47h-179z" fill="#c8c8aa" />
      <path d="M1659 842h30v40h-30zM1724 842h60v40h-60z" fill="#c8c8aa" />
      <path d="M1686 847l-10 9h10z" fill="#800000" strokeWidth="2" />
    </g>
    <g fill="#004000">
      <circle cx="1647" cy="486" r="16" />
      <circle cx="1469" cy="605" r="16" />
    </g>

    {/* audio generator */}
    <g stroke="#f00" strokeWidth="5" strokeLinecap="round" strokeLinejoin="round">
      <path d="M667 426l30-29 30 59zM727 456l29 30" />
      <path d="M775 410h12v46h-12zM787 410l17-18v83l-17-19" />
    </g>

    <g fill="#000" fontSize="49">
      <text x="616" y="414" fill="#f00">?</text>
      <text x="975" y="443">IN</text>
      <text x="1347" y="441">10k</text>
      <text x="1469" y="200">1000k</text>
      <text x="1228" y="678">3.3k</text>
      <text x="1680" y="475">3</text>
      <text x="1680" y="595">2</text>
    </g>
    <g fill="#000" fontSize="74">
      <text x="1227" y="442">R1</text>
      <text x="1468" y="135">R2</text>
      <text x="1227" y="561">R3</text>
      <text x="1642" y="822">C1</text>
    </g>
  </SheetDrawing>
);

const renderTool = (name, index) =>
  name === "|" ? (
    <Divider key={index} />
  ) : (
    <ToolButton key={name} type="button" aria-label={name} $active={activeTools.includes(name)}>
      <Icon name={name} />
    </ToolButton>
  );

const ErrorDialog = () => (
  <Dialog role="alertdialog" aria-labelledby="error-title" aria-describedby="error-text">
    <DialogTitle>
      <span id="error-title">Fatal Error</span>
      <DialogClose type="button" aria-label="Close">
        <CrossIcon size={13} color="#777" />
      </DialogClose>
    </DialogTitle>
    <DialogBody>
      <svg width="40" height="40" viewBox="0 0 40 40" aria-hidden="true">
        <circle cx="20" cy="20" r="20" fill="url(#errorRed)" />
        <path d="M12 12l16 16M28 12L12 28" stroke="#fff" strokeWidth="2" />
      </svg>
      <DialogText id="error-text">
        Internal Exception: access violation in module 'WINDIALOG.DLL'
        <br />
        [00002671].
      </DialogText>
    </DialogBody>
    <DialogFooter>
      <OkButton type="button">确定</OkButton>
    </DialogFooter>
  </Dialog>
);

const App = () => (
  <Window>
    <GlobalStyle />
    <GradientDefs />
    <TitleBar>
      <AppLogo />
      <WindowTitle>功放 - Proteus 8 Professional - 原理图绘制</WindowTitle>
      <CaptionButton type="button" aria-label="Minimize">
        <svg width="12" height="12"><path d="M0 5.500h12" stroke="#888" /></svg>
      </CaptionButton>
      <CaptionButton type="button" aria-label="Restore">
        <svg width="12" height="12" fill="none" stroke="#888">
          <rect x=".5" y="2.500" width="9" height="9" rx="1" />
          <path d="M3 .5h6.500q2 0 2 2V9" />
        </svg>
      </CaptionButton>
      <CaptionButton type="button" aria-label="Close">
        <CrossIcon size={12} color="#888" />
      </CaptionButton>
    </TitleBar>

    <MenuBar>
      {menus.map((menu) => (
        <button key={menu} type="button">{menu}</button>
      ))}
    </MenuBar>

    <ToolRow>
      {toolGroups.map((group) => (
        <ToolGroup key={group[0]} role="toolbar">
          <Grip />
          {group.map(renderTool)}
        </ToolGroup>
      ))}
    </ToolRow>

    <TabRow>
      <svg width="24" height="31" viewBox="0 0 24 31" aria-hidden="true">
        <path d="M0 25L24 0v31H0z" fill="#d9ebf6" />
        <path d="M0 25.500L24 .5" stroke="#6aa0bf" />
      </svg>
      <Tab>
        <Icon name="diode" size={18} />
        <TabName>原理图绘制</TabName>
        <TabClose type="button" aria-label="Close tab">
          <CrossIcon size={14} color="#666" width={1.5} />
        </TabClose>
      </Tab>
    </TabRow>
    <TabBand />

    <WorkArea>
      <SideBar>
        <SideGroup role="toolbar" aria-label="Modes">
          <SideGrip />
          {modes.map((name, index) =>
            name === "|" ? <SideDivider key={index} $space={1} /> : renderTool(name, index)
          )}
        </SideGroup>
        <SideGroup role="toolbar" aria-label="Rotation">
          <SideGrip />
          {["cw", "ccw"].map(renderTool)}
          <AngleInput aria-label="Angle" defaultValue="0°" />
          <SideDivider $space={3} />
          {["flipH", "flipV"].map(renderTool)}
        </SideGroup>
      </SideBar>

      <Panel>
        <Overview>
          <OverviewMap />
        </Overview>
        <Picker>
          <PickerTitle id="picker-title">GENERATORS</PickerTitle>
          <PickerList role="listbox" aria-labelledby="picker-title">
            {generators.map((name) => (
              <PickerItem key={name} role="option" aria-selected={name === "AUDIO"} $selected={name === "AUDIO"}>
                {name}
              </PickerItem>
            ))}
          </PickerList>
        </Picker>
      </Panel>

      <Sheet>
        <Schematic />
        <ErrorDialog />
      </Sheet>
    </WorkArea>

    <StatusBar>
      <StatusGroup $width={320}>
        <Grip />
        {["play", "step", "pause", "stop"].map((name) => (
          <PlayButton key={name} type="button" aria-label={name}>
            <Icon name={name} />
          </PlayButton>
        ))}
        <Divider />
        <Messages>
          <Icon name="info" />
          <span>No Messages</span>
        </Messages>
      </StatusGroup>
      <StatusGroup $width={412}>
        <Grip />
        <span>ROOT - Root sheet 1</span>
      </StatusGroup>
      <StatusGroup>
        <Grip />
      </StatusGroup>
    </StatusBar>
    <Taskbar>
      <TaskItem />
    </Taskbar>
  </Window>
);

export default App;
